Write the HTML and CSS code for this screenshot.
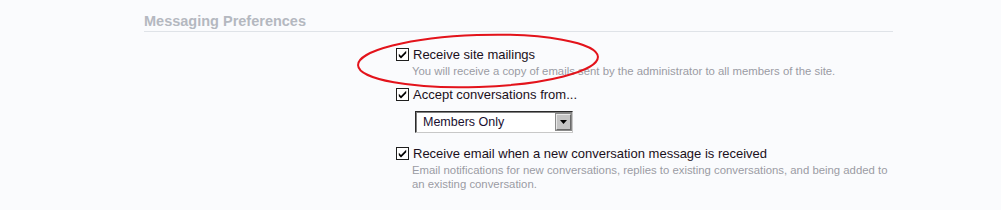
FILE: index.html
```html
<!DOCTYPE html>
<html lang="en">
<head>
  <meta charset="UTF-8">
  <title>Messaging Preferences</title>
  <link rel="stylesheet" href="styles.css">
</head>
<body>
  <div class="section">
    <h3 class="section-title">Messaging Preferences</h3>

    <ul class="options">
      <li class="option">
        <label class="check-row">
          <svg class="checkbox" width="13" height="13" viewBox="0 0 13 13"><rect x="0.5" y="0.5" width="12" height="12" fill="#fff" stroke="#1e1e1e"/><path d="M2.8 5.8 L5 8 L10.2 2.8 L10.2 5.2 L5 10.4 L2.8 8.2 Z" fill="#000"/></svg>
          <span>Receive site mailings</span>
        </label>
        <p class="hint">You will receive a copy of emails sent by the administrator to all members of the site.</p>
      </li>

      <li class="option">
        <label class="check-row">
          <svg class="checkbox" width="13" height="13" viewBox="0 0 13 13"><rect x="0.5" y="0.5" width="12" height="12" fill="#fff" stroke="#1e1e1e"/><path d="M2.8 5.8 L5 8 L10.2 2.8 L10.2 5.2 L5 10.4 L2.8 8.2 Z" fill="#000"/></svg>
          <span>Accept conversations from...</span>
        </label>
        <div class="select">
          <span class="select-value">Members Only</span>
          <span class="select-button">
            <svg width="7" height="4" viewBox="0 0 7 4"><path d="M0 0 H7 L3.5 4 Z" fill="#000"/></svg>
          </span>
        </div>
      </li>

      <li class="option">
        <label class="check-row">
          <svg class="checkbox" width="13" height="13" viewBox="0 0 13 13"><rect x="0.5" y="0.5" width="12" height="12" fill="#fff" stroke="#1e1e1e"/><path d="M2.8 5.8 L5 8 L10.2 2.8 L10.2 5.2 L5 10.4 L2.8 8.2 Z" fill="#000"/></svg>
          <span>Receive email when a new conversation message is received</span>
        </label>
        <p class="hint">Email notifications for new conversations, replies to existing conversations, and being added to an existing conversation.</p>
      </li>
    </ul>
  </div>

  <svg class="highlight" width="1001" height="210" viewBox="0 0 1001 210">
    <ellipse cx="478" cy="61" rx="120" ry="26" transform="rotate(-2 478 61)" fill="none" stroke="#e3131b" stroke-width="2"/>
  </svg>
</body>
</html>
```

FILE: styles.css
```css
body {
  margin: 0;
  background: #fafbfd;
  font-family: "Liberation Sans", Arial, sans-serif;
  height: 210px;
  overflow: hidden;
  position: relative;
}
.section {
  margin-left: 144px;
  width: 749px;
}
.section-title {
  margin: 12px 0 0;
  padding-bottom: 1px;
  font-size: 14.5px;
  line-height: 18px;
  font-weight: bold;
  color: #b4b8c0;
  border-bottom: 1px solid #dfe3e8;
}
.options {
  list-style: none;
  margin: 15px 0 0;
  padding: 0 0 0 252px;
}
.option {
  margin-bottom: 9px;
}
.option:nth-child(2) {
  margin-bottom: 13px;
}
.check-row {
  display: flex;
  align-items: center;
  gap: 4px;
  font-size: 13px;
  line-height: 16px;
  color: #1a1020;
}
.checkbox {
  flex: none;
  margin-top: -2px;
}
.hint {
  margin: 1px 0 0 16px;
  font-size: 11.35px;
  line-height: 14px;
  color: #9a9ca4;
}
.select {
  display: flex;
  align-items: center;
  justify-content: space-between;
  box-sizing: border-box;
  width: 158px;
  height: 22px;
  margin: 8px 0 0 19px;
  padding: 0 1px 0 7px;
  background: #fff;
  border: 1px solid #2a2a2a;
  border-right-color: #c8c8c8;
  border-bottom-color: #c8c8c8;
  box-shadow: inset 1px 1px 0 #808080;
  font-size: 12.5px;
  color: #1a1030;
}
.select-button {
  display: flex;
  align-items: center;
  justify-content: center;
  width: 15px;
  height: 16px;
  box-sizing: border-box;
  background: #c4c4c4;
  border: 1px solid #6a6a6a;
  border-top-color: #e8e8e8;
  border-left-color: #e8e8e8;
  box-shadow: 0 0 0 1px #8a8a8a;
}
.highlight {
  position: absolute;
  top: 0;
  left: 0;
  pointer-events: none;
}
```
